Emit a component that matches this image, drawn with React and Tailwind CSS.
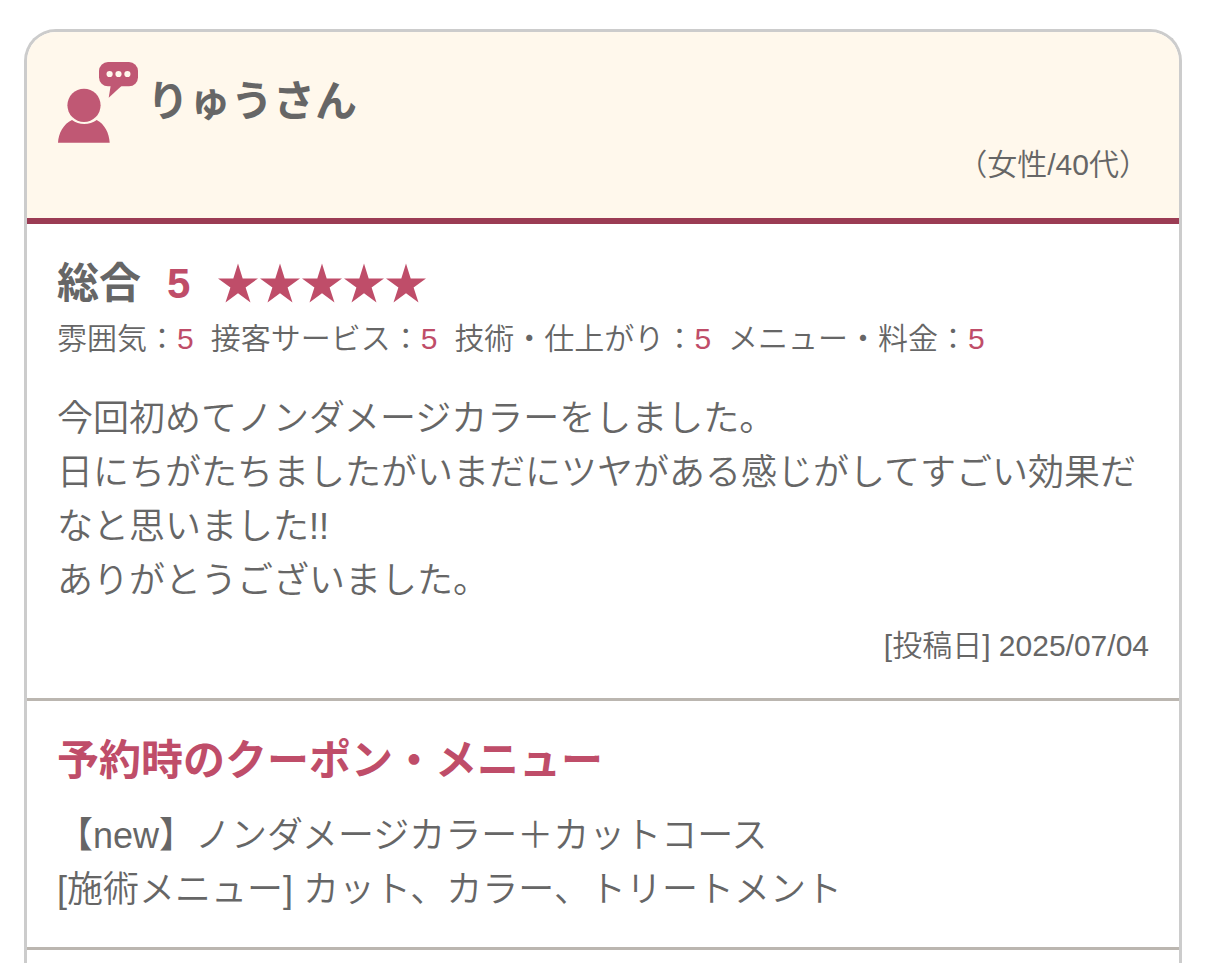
const ratings = [
  { label: "雰囲気", score: 5 },
  { label: "接客サービス", score: 5 },
  { label: "技術・仕上がり", score: 5 },
  { label: "メニュー・料金", score: 5 },
];

function ReviewerIcon() {
  return (
    <svg viewBox="0 0 81 82" className="w-[81px] h-[82px] shrink-0" fill="#c05874" aria-hidden="true">
      <circle cx="27" cy="43.3" r="16.6" />
      <path d="M1 80.800C1.500 71 6.500 62 15 58c7 5.200 17.500 5.200 24.700 0C47.500 62 52.300 71 52.700 80.800z" />
      <rect x="42" y="0" width="39" height="24.300" rx="9" />
      <path d="M53.700 23.500L51.700 35.700 65 23.500z" />
      <g fill="#fff8ec">
        <circle cx="52.6" cy="12" r="3.100" />
        <circle cx="61.5" cy="12" r="3.100" />
        <circle cx="70.4" cy="12" r="3.100" />
      </g>
    </svg>
  );
}

function Star() {
  return (
    <svg viewBox="0 0 42 42" className="w-[42px] h-[42px]" fill="#bf4d69" aria-hidden="true">
      <path d="M21 0.500l4.700 14.900H41L28.600 24.600 33.500 39.400 21 30.300 8.500 39.400l4.900-14.800L1 15.400h15.300z" />
    </svg>
  );
}

export default function App() {
  return (
    <main className="min-h-screen bg-white px-6 pt-[29px] text-[#666] font-[350] font-['Liberation_Sans','Noto_Sans_CJK_JP',sans-serif]">
      <article className="rounded-t-[32px] border-3 border-b-0 border-[#ccc] overflow-hidden">
        {/* Reviewer */}
        <header className="bg-[#fff8ec] border-b-6 border-[#9b3c54] px-[30px] pt-[30px] pb-8">
          <div className="flex gap-[9px]">
            <ReviewerIcon />
            <h1 className="pt-[10px] text-[42px] leading-[60px] font-bold">りゅうさん</h1>
          </div>
          <p className="text-right text-[30px] leading-[42px]">（女性/40代）</p>
        </header>

        {/* Scores and comment */}
        <section className="px-[30px] py-[30px] border-b-3 border-[#bbb6b0]">
          <div className="flex items-center text-[42px] leading-[60px] font-bold">
            <span>総合</span>
            <span className="ml-[26px] text-[#bf4d69]">5</span>
            <span className="ml-[27px] flex" role="img" aria-label="5">
              {[1, 2, 3, 4, 5].map((n) => (
                <Star key={n} />
              ))}
            </span>
          </div>
          <ul className="flex flex-wrap gap-x-[17px] text-[30px] leading-[50px]">
            {ratings.map((r) => (
              <li key={r.label}>
                {r.label}：<span className="text-[#bf4d69]">{r.score}</span>
              </li>
            ))}
          </ul>
          <p className="mt-7 text-[36px] leading-[54px]">
            今回初めてノンダメージカラーをしました。
            <br />
            日にちがたちましたがいまだにツヤがある感じがしてすごい効果だなと思いました!!
            <br />
            ありがとうございました。
          </p>
          <p className="mt-[15px] text-right text-[30px] leading-[45px]">[投稿日] 2025/07/04</p>
        </section>

        {/* Booked coupon and menu */}
        <section className="px-[30px] py-[30px] border-b-3 border-[#bbb6b0]">
          <h2 className="text-[42px] leading-[60px] font-bold text-[#bf4d69]">
            予約時のクーポン・メニュー
          </h2>
          <p className="mt-[18px] text-[36px] leading-[54px]">
            【new】ノンダメージカラー＋カットコース
            <br />
            [施術メニュー] カット、カラー、トリートメント
          </p>
        </section>
        <div className="h-8" />
      </article>
    </main>
  );
}
